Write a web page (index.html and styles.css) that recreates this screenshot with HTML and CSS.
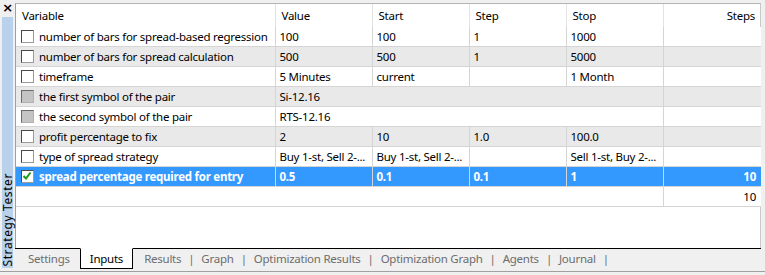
FILE: index.html
```html
<!DOCTYPE html>
<html>
<head>
<meta charset="utf-8">
<link rel="stylesheet" href="styles.css">
</head>
<body>
<div class="window">
  <div class="side">
    <div class="close">×</div>
    <div class="sidebar"><span class="sidetitle">Strategy Tester</span></div>
  </div>
  <div class="main">
    <div class="grid-area">
      <table class="grid">
        <colgroup>
          <col class="c-var"><col class="c-num"><col class="c-num"><col class="c-num"><col class="c-num"><col class="c-steps">
        </colgroup>
        <thead>
          <tr class="head">
            <th>Variable</th><th>Value</th><th>Start</th><th>Step</th><th>Stop</th><th class="right">Steps</th>
          </tr>
        </thead>
        <tbody>
          <tr class="odd">
            <td class="var"><span class="cb"></span>number of bars for spread-based regression</td>
            <td>100</td><td>100</td><td>1</td><td>1000</td><td class="right"></td>
          </tr>
          <tr class="even">
            <td class="var"><span class="cb"></span>number of bars for spread calculation</td>
            <td>500</td><td>500</td><td>1</td><td>5000</td><td class="right"></td>
          </tr>
          <tr class="odd">
            <td class="var"><span class="cb"></span>timeframe</td>
            <td>5 Minutes</td><td>current</td><td></td><td>1 Month</td><td class="right"></td>
          </tr>
          <tr class="even">
            <td class="var"><span class="cb disabled"></span>the first symbol of the pair</td>
            <td colspan="4">Si-12.16</td><td class="right"></td>
          </tr>
          <tr class="odd">
            <td class="var"><span class="cb disabled"></span>the second symbol of the pair</td>
            <td colspan="4">RTS-12.16</td><td class="right"></td>
          </tr>
          <tr class="even">
            <td class="var"><span class="cb"></span>profit percentage to fix</td>
            <td>2</td><td>10</td><td>1.0</td><td>100.0</td><td class="right"></td>
          </tr>
          <tr class="odd">
            <td class="var"><span class="cb"></span>type of spread strategy</td>
            <td>Buy 1-st, Sell 2-...</td><td>Buy 1-st, Sell 2-...</td><td></td><td>Sell 1-st, Buy 2-...</td><td class="right"></td>
          </tr>
          <tr class="selected">
            <td class="var"><span class="cb checked"><svg viewBox="0 0 10 10" width="10" height="10"><path d="M1.5 5 L4 7.5 L8.5 1.5" fill="none" stroke="#1a9a1a" stroke-width="2"/></svg></span>spread percentage required for entry</td>
            <td>0.5</td><td>0.1</td><td>0.1</td><td>1</td><td class="right">10</td>
          </tr>
          <tr class="odd total">
            <td colspan="5" class="blank"></td><td class="right">10</td>
          </tr>
        </tbody>
      </table>
    </div>
    <div class="tabs">
      <span class="tab first">Settings</span>
      <span class="tab active">Inputs</span>
      <span class="tab">Results</span><span class="sep">|</span>
      <span class="tab">Graph</span><span class="sep">|</span>
      <span class="tab">Optimization Results</span><span class="sep">|</span>
      <span class="tab">Optimization Graph</span><span class="sep">|</span>
      <span class="tab">Agents</span><span class="sep">|</span>
      <span class="tab">Journal</span><span class="sep">|</span>
    </div>
  </div>
</div>
</body>
</html>
```
FILE: styles.css
```css
html, body {
  margin: 0;
  padding: 0;
}
body {
  width: 765px;
  height: 275px;
  background: #f0f0f0;
  font-family: "Noto Sans", "Segoe UI", sans-serif;
  font-size: 11.5px;
  letter-spacing: -0.25px;
  color: #000;
  overflow: hidden;
}
.window {
  display: flex;
  height: 271px;
  border-bottom: 1px solid #a0a0a0;
}
.side {
  width: 15px;
  display: flex;
  flex-direction: column;
}
.close {
  height: 17px;
  line-height: 15px;
  font-size: 13px;
  font-weight: bold;
  text-align: center;
  font-family: "DejaVu Sans", sans-serif;
}
.sidebar {
  flex: 1;
  margin: 0 2px 3px 2px;
  background: #b9d1ea;
  display: flex;
  align-items: flex-end;
  justify-content: center;
}
.sidetitle {
  writing-mode: vertical-rl;
  transform: rotate(180deg);
  white-space: nowrap;
  line-height: 11px;
  font-size: 12px;
  letter-spacing: 0.6px;
  padding-top: 2px;
  color: #000;
}
.main {
  width: 746px;
  margin-top: 3px;
  display: flex;
  flex-direction: column;
}
.grid-area {
  height: 244px;
  background: #fff;
  border-top: 1px solid #b4b4b4;
  border-left: 1px solid #a0a0a0;
  border-right: 1px solid #c8c8c8;
}
.grid {
  border-collapse: collapse;
  table-layout: fixed;
  width: 745px;
}
.c-var { width: 259px; }
.c-num { width: 97px; }
.c-steps { width: 98px; }
.grid th, .grid td {
  white-space: nowrap;
  overflow: hidden;
  text-align: left;
  padding: 0 4px;
  border-right: 1px solid #d5d5d5;
}
.grid th {
  font-weight: normal;
}
.grid th:last-child, .grid td:last-child {
  border-right: none;
}
.grid td.right, .grid th.right {
  text-align: right;
  padding-right: 5px;
}
.head th {
  height: 23px;
  padding: 0 6px;
  border-right-color: #e3e3e3;
}
.grid th.right { padding-right: 6px; }
.grid tbody tr td {
  height: 19px;
  border-bottom: 1px solid #d5d5d5;
}
.odd { background: #fff; }
.even { background: #e9e9e9; }
.selected {
  background: #3399ff;
  color: #fff;
}
.selected td {
  font-weight: bold;
  border-right-color: #d5d5d5;
}
.var {
  padding-left: 5px !important;
}
.cb {
  display: inline-block;
  vertical-align: -2px;
  width: 11px;
  height: 11px;
  margin-right: 5px;
  background: #fff;
  border: 1px solid #4a4a4a;
  border-right-color: #9a9a9a;
  border-bottom-color: #9a9a9a;
  position: relative;
}
.cb.disabled {
  background: #c4c4c4;
  border-color: #6a6a6a #b0b0b0 #b0b0b0 #6a6a6a;
}
.cb svg {
  position: absolute;
  left: 0;
  top: 0;
}
.total td.blank { border-right: 1px solid #d5d5d5; }
.tabs {
  height: 20px;
  border-top: 1px solid #000;
  display: flex;
  align-items: flex-start;
  color: #6d6d6d;
  line-height: 19px;
}
.tab {
  padding: 0 7px;
}
.tab.first {
  padding: 0 10px 0 13px;
}
.tab.active {
  background: #fff;
  color: #000;
  border: 1px solid #000;
  height: 19px;
  padding: 0 9px;
  margin: -1px 4px 0 0;
  border-top: 1px solid #fff;
}
.sep {
  color: #6d6d6d;
}
```
